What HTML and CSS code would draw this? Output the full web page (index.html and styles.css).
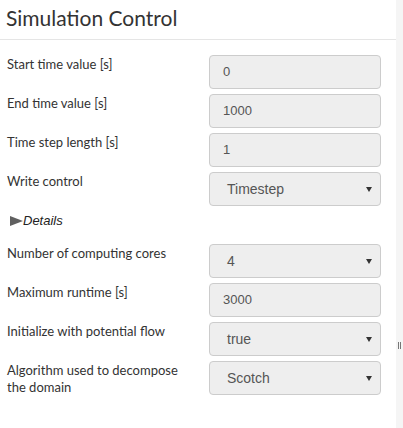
FILE: index.html
```html
<!DOCTYPE html>
<html>
<head>
<meta charset="utf-8">
<link rel="stylesheet" href="styles.css">
</head>
<body>
<div class="page">
  <div class="panel">
    <h1 class="title">Simulation Control</h1>
    <form class="form">
      <div class="row"><label class="lbl">Start time value [s]</label><div class="field">0</div></div>
      <div class="row"><label class="lbl">End time value [s]</label><div class="field">1000</div></div>
      <div class="row"><label class="lbl">Time step length [s]</label><div class="field">1</div></div>
      <div class="row"><label class="lbl">Write control</label><div class="field select"><span>Timestep</span><span class="caret"></span></div></div>
      <div class="details"><svg class="tri" width="13" height="10" viewBox="0 0 13 10"><polygon points="0,0 13,5 0,10" fill="#606060"/></svg><span class="dtext">Details</span></div>
      <div class="row"><label class="lbl">Number of computing cores</label><div class="field select"><span>4</span><span class="caret"></span></div></div>
      <div class="row"><label class="lbl">Maximum runtime [s]</label><div class="field">3000</div></div>
      <div class="row"><label class="lbl">Initialize with potential flow</label><div class="field select"><span>true</span><span class="caret"></span></div></div>
      <div class="row"><label class="lbl">Algorithm used to decompose the domain</label><div class="field select"><span>Scotch</span><span class="caret"></span></div></div>
    </form>
  </div>
  <div class="strip"><span class="handle"></span></div>
</div>
</body>
</html>
```
FILE: styles.css
```css
html, body {
  margin: 0;
  padding: 0;
  background: #fff;
}
.page {
  display: flex;
  width: 403px;
  height: 428px;
  overflow: hidden;
}
.panel {
  width: 396px;
  flex: none;
}
.strip {
  flex: 1;
  background: #f5f5f5;
  position: relative;
}
.handle {
  position: absolute;
  left: 2px;
  top: 342px;
  width: 1px;
  height: 7px;
  border-left: 1px solid #777;
  border-right: 1px solid #777;
}
.title {
  margin: 0;
  padding: 4px 0 0 6px;
  box-sizing: border-box;
  height: 40px;
  font-family: Lato, sans-serif;
  font-weight: normal;
  font-size: 21px;
  line-height: 28px;
  color: #333;
  border-bottom: 1px solid #e5e5e5;
}
.form {
  display: flex;
  flex-direction: column;
  gap: 5px;
  padding-top: 15px;
}
.row {
  display: grid;
  grid-template-columns: 209px 172px;
  align-items: start;
}
.lbl {
  padding-left: 7px;
  padding-right: 20px;
  padding-top: 1px;
  font-family: Lato, sans-serif;
  font-size: 13px;
  line-height: 17px;
  color: #333;
}
.field {
  box-sizing: border-box;
  height: 34px;
  border: 1px solid #ccc;
  border-radius: 4px;
  background: #eee;
  padding: 6px 13px;
  font-family: "Liberation Sans", Arial, sans-serif;
  font-size: 13px;
  line-height: 20px;
  color: #555;
}
.select {
  display: flex;
  justify-content: space-between;
  align-items: center;
  padding: 6px 8px 6px 17px;
  font-size: 14px;
}
.caret {
  width: 0;
  height: 0;
  border-left: 3px solid transparent;
  border-right: 3px solid transparent;
  border-top: 5px solid #333;
}
.details {
  display: flex;
  align-items: center;
  padding: 0 0 8px 10px;
  height: 20px;
  font-family: "Liberation Sans", Arial, sans-serif;
  font-style: italic;
  font-size: 13px;
  line-height: 20px;
  color: #222;
}
.tri {
  display: block;
}
```
